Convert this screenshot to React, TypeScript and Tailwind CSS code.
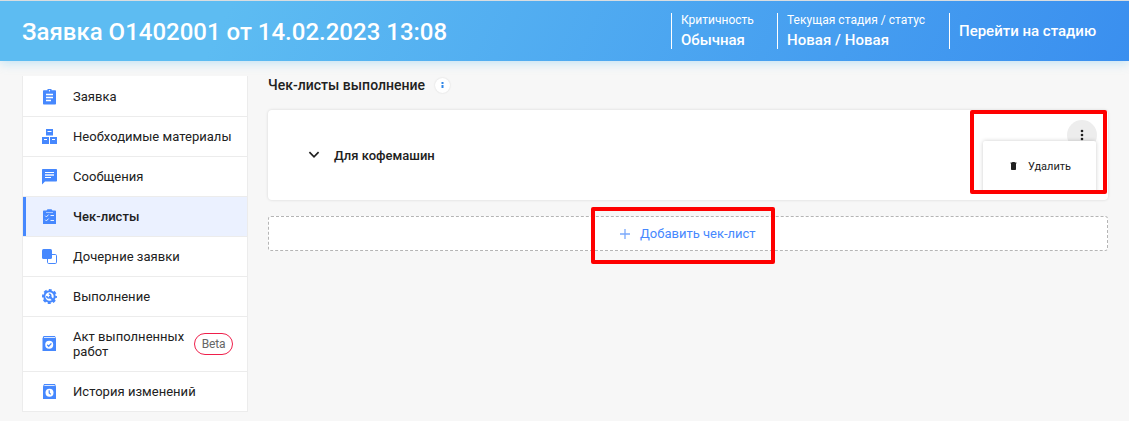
import type { ReactNode } from 'react';

const BLUE = '#4688fe';

function ClipboardIcon() {
  return (
    <svg width="16" height="16" viewBox="0 0 16 16">
      <path fill={BLUE} d="M2 1.200h3.400a2.100 2.100 0 0 1 4.200 0H13c.6 0 1 .4 1 1V14.500c0 .6-.4 1-1 1H2c-.6 0-1-.4-1-1V2.200c0-.6.4-1 1-1z" />
      <circle cx="7.500" cy="1.700" r=".7" fill="#fff" />
      <path stroke="#fff" strokeWidth="1.300" d="M4 5.500h7M4 8.500h7M4 11.500h5" />
    </svg>
  );
}

function BoxesIcon() {
  return (
    <svg width="16" height="16" viewBox="0 0 16 16">
      <path fill={BLUE} d="M4 0h7v6.500H4zM0 8h7v7H0zM8 8h7v7H8z" />
      <path stroke="#fff" strokeWidth="1" d="M5.500 2.500h4M2 10.500h3M10 10.500h3" />
    </svg>
  );
}

function MessageIcon() {
  return (
    <svg width="16" height="16" viewBox="0 0 16 16">
      <path fill={BLUE} d="M1 0h13c.6 0 1 .4 1 1v10.500c0 .6-.4 1-1 1H3L0 15.500V1c0-.6.4-1 1-1z" />
      <path stroke="#fff" strokeWidth="1.200" d="M3 3.500h9M3 8.500h6" />
      <path stroke="#c9dcff" strokeWidth="2" d="M3 6h9" />
    </svg>
  );
}

function ChecklistIcon() {
  return (
    <svg width="16" height="16" viewBox="0 0 16 16">
      <path fill={BLUE} d="M2 1.500h2.500L5.500.2h4l1 1.300H13c.6 0 1 .4 1 1V15H1V2.500c0-.6.400-1 1-1z" />
      <path fill="none" stroke="#ebf1ff" strokeWidth="1" d="M3.200 6.700l1.200 1.200L6.600 5.600M3.200 10.700l1.200 1.200L6.600 9.600M8.500 6.500H12M8.500 11.500H12" />
      <path stroke="#a9c7ff" strokeWidth="1" d="M4 3.500h7" />
    </svg>
  );
}

function ChildrenIcon() {
  return (
    <svg width="16" height="16" viewBox="0 0 16 16">
      <rect x="5.500" y="5.500" width="9" height="9" rx="1.200" fill="#fff" stroke={BLUE} />
      <rect x="0" y="0" width="10" height="10" rx="1.500" fill={BLUE} />
    </svg>
  );
}

function GearIcon() {
  return (
    <svg width="16" height="16" viewBox="0 0 16 16">
      <circle cx="7.500" cy="7.500" r="5.200" fill="none" stroke={BLUE} strokeWidth="2" />
      <circle cx="7.500" cy="7.500" r="6.500" fill="none" stroke={BLUE} strokeWidth="2" strokeDasharray="2.900 2.205" strokeDashoffset="1.450" />
      <path fill="none" stroke={BLUE} strokeWidth="2.100" strokeLinecap="round" d="M7.800 7.800l3 3" />
      <path fill="none" stroke={BLUE} strokeWidth="1.500" d="M6.800 4.900a2 2 0 1 1-2 2" />
    </svg>
  );
}

function ActIcon() {
  return (
    <svg width="16" height="16" viewBox="0 0 16 16">
      <path fill={BLUE} d="M1.500 0h11.500l1 2.500V15H.500V2.500z" />
      <path stroke="#dbe7ff" strokeWidth="1" d="M2 1.500h11" />
      <circle cx="7.200" cy="8.700" r="4" fill="#fff" />
      <path fill="none" stroke={BLUE} strokeWidth="1.300" d="M5.200 8.800l1.500 1.500 2.700-2.900" />
    </svg>
  );
}

function HistoryIcon() {
  return (
    <svg width="16" height="16" viewBox="0 0 16 16">
      <path fill={BLUE} d="M2 0h11l1 2.500V15H1V2.500z" />
      <path stroke="#dbe7ff" strokeWidth="1" d="M2.300 1.500h10.400" />
      <circle cx="7.500" cy="8.700" r="4" fill="#fff" />
      <path fill="none" stroke={BLUE} strokeWidth="1.200" d="M7.200 6.200v2.700l1.600 1.500" />
    </svg>
  );
}

type Item = { label: ReactNode; icon: ReactNode; active?: boolean; beta?: boolean };

const items: Item[] = [
  { label: 'Заявка', icon: <ClipboardIcon /> },
  { label: 'Необходимые материалы', icon: <BoxesIcon /> },
  { label: 'Сообщения', icon: <MessageIcon /> },
  { label: 'Чек-листы', icon: <ChecklistIcon />, active: true },
  { label: 'Дочерние заявки', icon: <ChildrenIcon /> },
  { label: 'Выполнение', icon: <GearIcon /> },
  { label: <>Акт выполненных<br />работ</>, icon: <ActIcon />, beta: true },
  { label: 'История изменений', icon: <HistoryIcon /> },
];

function Sidebar() {
  return (
    <nav className="w-[226px] shrink-0 self-start border-x border-[#ececec] bg-white pt-px">
      {items.map((item, i) => (
        <div
          key={i}
          className={`flex items-center border-b border-[#ececec] pr-3.5 ${item.beta ? 'h-[55px]' : 'h-10'} ${item.active ? 'bg-[#ebf1ff]' : ''}`}
        >
          <span className={`w-[3px] self-stretch ${item.active ? 'bg-[#4688fe]' : ''}`} />
          <span className="ml-4 w-[31px] shrink-0">{item.icon}</span>
          <span className={`whitespace-nowrap text-[13px] leading-[15px] tracking-[0.03px] text-[#212121] ${item.active ? 'font-medium' : ''}`}>
            {item.label}
          </span>
          {item.beta && (
            <span className="ml-auto flex h-[22px] w-[39px] shrink-0 items-center justify-center rounded-full border border-[#ef1f4b] text-[12px] tracking-[-0.2px] text-[#666]">
              Beta
            </span>
          )}
        </div>
      ))}
    </nav>
  );
}

function Header() {
  return (
    <header className="flex h-[61px] items-center border-t border-[#d9dde0] bg-[linear-gradient(115deg,#5dbcf2_20%,#3a8fef_100%)] pl-[22px] text-white shadow-[0_2px_10px_rgba(93,188,242,0.35)]">
      <h1 className="w-[649px] whitespace-nowrap pt-px text-[24px] font-medium leading-none">Заявка О1402001 от 14.02.2023 13:08</h1>
      <div className="h-9 w-[106px] border-l border-white pl-[9px] whitespace-nowrap">
        <div className="text-[12px] leading-[14px]">Критичность</div>
        <div className="mt-1 text-[15px] font-medium leading-[18px] tracking-[-0.03px]">Обычная</div>
      </div>
      <div className="h-9 w-[172px] border-l border-white pl-[9px] whitespace-nowrap">
        <div className="text-[12px] leading-[14px] tracking-[0.03px]">Текущая стадия / статус</div>
        <div className="mt-1 text-[15px] font-medium leading-[18px] tracking-[0.05px]">Новая / Новая</div>
      </div>
      <div className="flex h-9 items-center border-l border-white pl-[9px] whitespace-nowrap text-[15px] font-medium">
        Перейти на стадию
      </div>
    </header>
  );
}

export default function App() {
  return (
    <div className="h-[421px] w-[1129px] overflow-hidden bg-[#f7f7f7] font-['Roboto',sans-serif] text-[#212121]">
      <Header />
      <div className="flex gap-5 pl-[22px] pt-[15px]">
        <Sidebar />
        <main className="w-[840px]">
          <div className="flex h-[18px] items-center gap-[11px]">
            <h2 className="w-[156px] whitespace-nowrap text-[14px] font-medium tracking-[0.02px]">Чек-листы выполнение</h2>
            <span className="flex size-[15px] items-center justify-center rounded-full bg-white shadow-[0_0_2px_rgba(0,0,0,0.14)]">
              <svg width="3" height="6" viewBox="0 0 3 6"><path fill="#2f86e8" d="M.500 0h2v2h-2zM.500 3h2v3h-2z" /></svg>
            </span>
          </div>

          <section className="relative mt-4 flex h-[90px] items-center rounded-sm bg-white pl-10 shadow-[0_0_3px_rgba(0,0,0,0.14)]">
            <svg width="12" height="8" viewBox="0 0 12 8"><path fill="none" stroke="#212121" strokeWidth="1.700" d="M1.400 1.200L6 5.800l4.600-4.600" /></svg>
            <span className="ml-[14px] pt-[2px] text-[13px] font-medium">Для кофемашин</span>

            <div className="absolute left-[702px] top-0 h-[84px] w-[137px] overflow-hidden rounded-[2px] border-4 border-[#fe0000]">
              <div className="absolute right-[6px] top-[6px] flex size-[30px] items-center justify-center rounded-full bg-[#ededed]">
                <svg width="4" height="12" viewBox="0 0 4 12"><g fill="#212121"><circle cx="2" cy="2" r="1.300" /><circle cx="2" cy="6" r="1.300" /><circle cx="2" cy="10" r="1.300" /></g></svg>
              </div>
              <div className="absolute left-[9px] top-[27px] flex h-[60px] w-[113px] rounded-[2px] bg-white pl-[27px] pt-[19px] shadow-[0_0_4px_rgba(0,0,0,0.2)]">
                <svg className="mt-[2px]" width="7" height="8" viewBox="0 0 7 8"><path fill="#212121" d="M.500.600h1.700V0h2.600v.6h1.700v1H6v5.600c0 .5-.3.800-.8.800H1.800c-.5 0-.8-.3-.8-.8V1.600H.500z" /></svg>
                <span className="ml-[11px] text-[11px] leading-[14px]">Удалить</span>
              </div>
            </div>
          </section>

          <button className="relative mt-4 flex h-[35px] w-full items-center rounded-[3px] border border-dashed border-[#b5b5b5] bg-white pl-[351px] text-[13px] text-[#4688fe]">
            <svg width="10" height="10" viewBox="0 0 10 10"><path stroke="#7ba9fb" strokeWidth="1.300" d="M5 0v10M0 5h10" /></svg>
            <span className="ml-[10px] whitespace-nowrap">Добавить чек-лист</span>
            <span className="absolute -top-[10px] left-[322px] h-[57px] w-[184px] rounded-[2px] border-4 border-[#fe0000]" />
          </button>
        </main>
      </div>
    </div>
  );
}
